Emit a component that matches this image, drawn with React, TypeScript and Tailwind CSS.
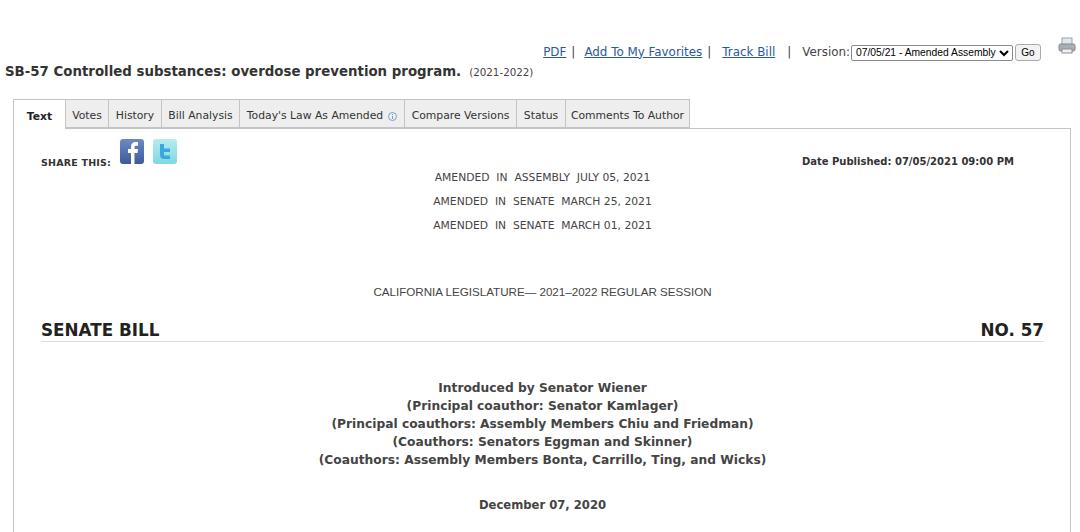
import React from 'react';

const tabs = [
  { label: 'Votes', w: 'w-[43px]' },
  { label: 'History', w: 'w-[53px]' },
  { label: 'Bill Analysis', w: 'w-[78px]' },
  { label: "Today's Law As Amended", w: 'w-[165px]', info: true },
  { label: 'Compare Versions', w: 'w-[112px]' },
  { label: 'Status', w: 'w-[49px]' },
  { label: 'Comments To Author', w: 'w-[124px]' },
];

const amended = [
  'AMENDED  IN  ASSEMBLY  JULY 05, 2021',
  'AMENDED  IN  SENATE  MARCH 25, 2021',
  'AMENDED  IN  SENATE  MARCH 01, 2021',
];

const authors = [
  'Introduced by Senator Wiener',
  '(Principal coauthor: Senator Kamlager)',
  '(Principal coauthors: Assembly Members Chiu and Friedman)',
  '(Coauthors: Senators Eggman and Skinner)',
  '(Coauthors: Assembly Members Bonta, Carrillo, Ting, and Wicks)',
];

const FacebookIcon = () => (
  <svg width="24" height="25" viewBox="0 0 24 25" className="block">
    <defs>
      <linearGradient id="fb" x1="0" y1="0" x2="0" y2="1">
        <stop offset="0" stopColor="#6d8cc4" />
        <stop offset="1" stopColor="#3b5a9a" />
      </linearGradient>
    </defs>
    <rect width="24" height="25" rx="3" fill="url(#fb)" />
    <path d="M11 25V14H8v-4h3V7.500C11 4.500 12.800 3 15.400 3H18v3.800h-1.800c-1.300 0-1.700.6-1.700 1.600V10H18l-.5 4h-3v11z" fill="#fff" />
  </svg>
);

const TwitterIcon = () => (
  <svg width="24" height="25" viewBox="0 0 24 25" className="block">
    <defs>
      <linearGradient id="tw" x1="0" y1="0" x2="0" y2="1">
        <stop offset="0" stopColor="#b5ecf0" />
        <stop offset="1" stopColor="#7fd8e0" />
      </linearGradient>
    </defs>
    <rect width="24" height="25" rx="3" fill="url(#tw)" />
    <path d="M7 5h4v4.500h6v3.500h-6v2.200c0 1 .5 1.300 1.400 1.300H17V20h-6c-2.600 0-4-1.500-4-4z" fill="#38a9dc" />
  </svg>
);

const PrinterIcon = () => (
  <svg width="18" height="18" viewBox="0 0 18 18" className="block">
    <rect x="4" y="1" width="10" height="7" fill="#dfe6ee" stroke="#9aa3ad" />
    <rect x="1" y="7" width="16" height="7" rx="1.500" fill="#a9afb5" stroke="#80868c" />
    <rect x="4" y="12" width="10" height="4" fill="#f1f1f1" stroke="#8b8f94" />
  </svg>
);

const InfoIcon = () => (
  <svg width="9" height="9" viewBox="0 0 9 9" className="block">
    <circle cx="4.500" cy="4.500" r="4" fill="none" stroke="#5b8fc9" strokeWidth="0.800" />
    <path d="M4.500 2v1M4.500 4v3" stroke="#5b8fc9" strokeWidth="0.900" />
  </svg>
);

export default function App() {
  return (
    <div className="h-[532px] overflow-hidden bg-white text-[#333] font-['DejaVu_Sans',Verdana,sans-serif]">
      {/* top links */}
      <div className="flex items-start justify-end pt-[36px] pr-[4px] h-[60px]">
        <div className="flex items-center h-[17px] mt-[8px] text-[11.900px] text-[#444]">
          <a className="text-[#2a5a9c] underline">PDF</a>
          <span className="ml-[5px]">|</span>
          <a className="ml-[9px] text-[#2a5a9c] underline">Add To My Favorites</a>
          <span className="ml-[5px]">|</span>
          <a className="ml-[11px] text-[#2a5a9c] underline">Track Bill</a>
          <span className="ml-[12px]">|</span>
          <span className="ml-[11px]">Version:</span>
          <select className="ml-[1px] w-[162px] h-[16px] border border-[#8a8a8a] rounded-[2px] bg-white text-[10.300px] text-black font-['Liberation_Sans',sans-serif]">
            <option>07/05/21 - Amended Assembly</option>
          </select>
          <button className="ml-[2px] w-[26px] h-[17px] border border-[#aaa] rounded-[3px] bg-[#f2f2f2] text-[10px] text-black font-['Liberation_Sans',sans-serif]">
            Go
          </button>
        </div>
        <div className="ml-[17px] mt-[1px]">
          <PrinterIcon />
        </div>
      </div>

      {/* title */}
      <div className="flex items-baseline h-[37px] pl-[5px] mt-[2px]">
        <span className="text-[13.350px] font-bold text-[#333]">SB-57 Controlled substances: overdose prevention program.</span>
        <span className="ml-[8px] text-[10.300px] text-[#444]">(2021-2022)</span>
      </div>

      {/* tabs */}
      <div className="ml-[13px] flex h-[29px] text-[10.800px] text-[#333]">
        <div className="w-[53px] h-[30px] pt-[5px] relative z-10 flex items-center justify-center bg-white border border-b-0 border-[#c4c4c4] font-bold text-[#222]">
          Text
        </div>
        {tabs.map((tab) => (
          <div
            key={tab.label}
            className={`${tab.w} pt-[5px] flex items-center justify-center gap-[5px] bg-[#eeeeee] border border-l-0 border-[#c4c4c4] whitespace-nowrap`}
          >
            {tab.label}
            {tab.info && <InfoIcon />}
          </div>
        ))}
      </div>

      {/* panel */}
      <div className="ml-[13px] mr-[9px] h-[500px] border border-[#c4c4c4] pl-[27px] pr-[26px]">
        <div className="flex justify-between h-[42px]">
          <div className="flex items-start pt-[10px]">
            <span className="mt-[17px] text-[9.500px] font-bold text-[#333] tracking-[0.2px]">SHARE THIS:</span>
            <span className="ml-[9px]"><FacebookIcon /></span>
            <span className="ml-[9px]"><TwitterIcon /></span>
          </div>
          <div className="pt-[25px] pr-[30px] text-[10px] font-bold text-[#333]">Date Published: 07/05/2021 09:00 PM</div>
        </div>

        <div className="flex flex-col items-center gap-[10px] text-[10.750px] text-[#444] leading-[14px] whitespace-pre">
          {amended.map((line) => (
            <div key={line}>{line}</div>
          ))}
        </div>

        <div className="mt-[52px] text-center text-[11.600px] leading-[14px] text-[#444] font-['Liberation_Sans',sans-serif]">
          CALIFORNIA LEGISLATURE— 2021–2022 REGULAR SESSION
        </div>

        <div className="mt-[20px] flex justify-between items-end h-[23px] pb-[1px] border-b border-[#dcdcdc] text-[16.800px] leading-[20px] font-bold text-[#222]">
          <span>SENATE BILL</span>
          <span>NO. 57</span>
        </div>

        <div className="mt-[37px] text-center text-[12.250px] font-bold leading-[18px] text-[#444]">
          {authors.map((line) => (
            <div key={line}>{line}</div>
          ))}
          <div className="mt-[27px] text-[11.600px]">December 07, 2020</div>
        </div>
      </div>
    </div>
  );
}
